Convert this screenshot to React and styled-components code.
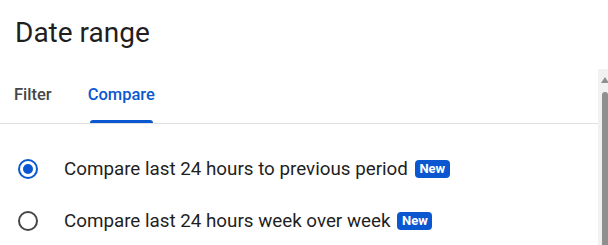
import React, { useState } from 'react';
import styled, { createGlobalStyle } from 'styled-components';

const GlobalStyle = createGlobalStyle`
  html, body {
    margin: 0;
    padding: 0;
    background: #fff;
  }
  body {
    font-family: Roboto, "Noto Sans", Arial, sans-serif;
    color: #1f1f1f;
  }
`;

const Panel = styled.div`
  position: relative;
  width: 608px;
  height: 245px;
  overflow: hidden;
  background: #fff;
`;

const Title = styled.h1`
  margin: 0;
  padding: 17px 15px 0;
  font-size: 28px;
  font-weight: 400;
  line-height: 32px;
  color: #1f1f1f;
`;

const Tabs = styled.div`
  display: flex;
  margin-top: 36px;
  width: 598px;
  border-bottom: 1px solid #e0e0e0;
  padding-left: 14px;
  box-sizing: border-box;
  gap: 36px;
`;

const Tab = styled.button`
  border: none;
  background: none;
  margin: 0;
  padding: 0 0 18px;
  font-family: inherit;
  font-size: 16.5px;
  font-weight: 500;
  line-height: 20px;
  cursor: pointer;
  color: ${(p) => (p.$active ? '#0b57d0' : '#444746')};
  position: relative;
  &::after {
    content: '';
    display: ${(p) => (p.$active ? 'block' : 'none')};
    position: absolute;
    left: 2px;
    right: 2px;
    bottom: 0;
    height: 3px;
    border-radius: 3px 3px 0 0;
    background: #0b57d0;
  }
`;

const Options = styled.div`
  display: flex;
  flex-direction: column;
  padding: 34px 0 0 18px;
  gap: 30px;
`;

const Option = styled.label`
  display: flex;
  align-items: center;
  gap: 26px;
  height: 22px;
  cursor: pointer;
  font-size: 18.8px;
  color: #1f1f1f;
`;

const Radio = styled.span`
  width: 16px;
  height: 16px;
  border-radius: 50%;
  border: 2px solid ${(p) => (p.$checked ? '#0b57d0' : '#444746')};
  display: flex;
  align-items: center;
  justify-content: center;
  flex-shrink: 0;
  &::after {
    content: '';
    width: 10px;
    height: 10px;
    border-radius: 50%;
    background: #0b57d0;
    display: ${(p) => (p.$checked ? 'block' : 'none')};
  }
`;

const Label = styled.span`
  display: flex;
  align-items: center;
  gap: 7px;
`;

const Badge = styled.span`
  background: #0b57d0;
  color: #fff;
  font-size: 13px;
  font-weight: 700;
  line-height: 18px;
  padding: 0 4.5px;
  border-radius: 4px;
`;

const Scrollbar = styled.div`
  position: absolute;
  right: 0;
  top: 69px;
  bottom: 0;
  width: 10px;
  background: #f1f1f1;
`;

const Arrow = styled.div`
  position: absolute;
  left: 3px;
  top: 8px;
  width: 0;
  height: 0;
  border-left: 4px solid transparent;
  border-right: 4px solid transparent;
  border-bottom: 6px solid #8f8f8f;
`;

const Thumb = styled.div`
  position: absolute;
  left: 4px;
  right: 0;
  top: 23px;
  bottom: 0;
  border-radius: 3px 3px 0 0;
  background: #8f8f8f;
`;

const options = [
  'Compare last 24 hours to previous period',
  'Compare last 24 hours week over week',
];

export default function App() {
  const [tab, setTab] = useState('compare');
  const [selected, setSelected] = useState(0);

  return (
    <Panel>
      <GlobalStyle />
      <Title>Date range</Title>
      <Tabs>
        <Tab $active={tab === 'filter'} onClick={() => setTab('filter')}>Filter</Tab>
        <Tab $active={tab === 'compare'} onClick={() => setTab('compare')}>Compare</Tab>
      </Tabs>
      <Options>
        {options.map((text, i) => (
          <Option key={text} onClick={() => setSelected(i)}>
            <Radio $checked={selected === i} />
            <Label>
              {text}
              <Badge>New</Badge>
            </Label>
          </Option>
        ))}
      </Options>
      <Scrollbar>
        <Arrow />
        <Thumb />
      </Scrollbar>
    </Panel>
  );
}
